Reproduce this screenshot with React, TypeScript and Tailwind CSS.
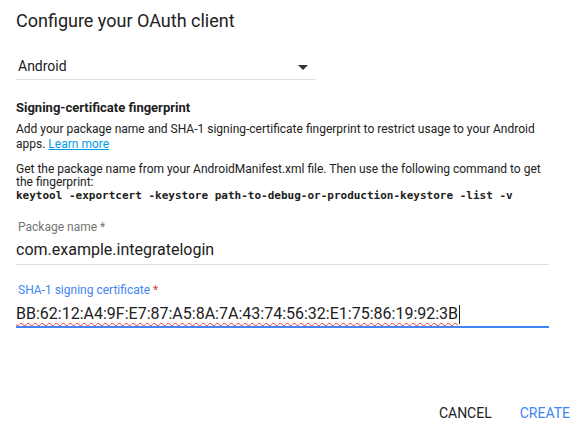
import React from 'react';

export default function App() {
  return (
    <div className="w-[588px] h-[439px] bg-white relative text-[#212121]" style={{ fontFamily: 'Roboto, "Liberation Sans", sans-serif' }}>
      <div className="px-4 pt-[9px]">
        <h1 className="text-[18px] leading-[24px] text-[#212121]">Configure your OAuth client</h1>

        {/* application type select */}
        <div className="mt-[22px] w-[300px] border-b border-[#e0e0e0] flex items-center justify-between pl-[2px] pr-[8px] h-[25px] pb-[1px]">
          <span className="text-[14px] text-[#212121]">Android</span>
          <svg width="10" height="5" viewBox="0 0 10 5" className="mt-[1px]">
            <path d="M0 0 L10 0 L5 5 Z" fill="#333" />
          </svg>
        </div>

        <div className="mt-[19px]">
          <div className="text-[13px] font-bold leading-[18px] text-[#212121]">Signing-certificate fingerprint</div>
          <p className="mt-[5px] text-[12px] leading-[15px] text-[#212121] w-[540px]">
            Add your package name and SHA-1 signing-certificate fingerprint to restrict usage to your Android apps.{' '}
            <span className="text-[#039be5] underline">Learn more</span>
          </p>
          <p className="mt-[11px] text-[12px] leading-[13px] text-[#212121] w-[540px]">
            Get the package name from your AndroidManifest.xml file. Then use the following command to get the fingerprint:
          </p>
          <div className="text-[11px] leading-[13px] font-bold text-[#212121]" style={{ fontFamily: '"DejaVu Sans Mono", monospace' }}>
            keytool -exportcert -keystore path-to-debug-or-production-keystore -list -v
          </div>
        </div>

        {/* package name */}
        <div className="mt-[18px] w-[533px]">
          <div className="text-[12px] leading-[14px] text-[#757575] pl-[2px]">Package name<span className="text-[#757575]"> *</span></div>
          <div className="mt-[6px] text-[16px] leading-[20px] text-[#212121] pb-[4px] border-b border-[#e0e0e0]">com.example.integratelogin</div>
        </div>

        {/* sha-1 */}
        <div className="mt-[18px] w-[533px]">
          <div className="text-[12px] leading-[14px] text-[#4285f4] pl-[2px]">SHA-1 signing certificate<span className="text-[#db4437]"> *</span></div>
          <div className="mt-[7px] text-[16px] leading-[20px] text-[#212121] pb-[2px] border-b-2 border-[#4285f4] flex items-center">
            <span className="underline decoration-wavy decoration-[#e53935] decoration-1 underline-offset-[3px]">BB:62:12:A4:9F:E7:87:A5:8A:7A:43:74:56:32:E1:75:86:19:92:3B</span>
            <span className="inline-block w-[1px] h-[19px] bg-[#212121] ml-[1px]" />
          </div>
        </div>
      </div>

      <div className="absolute right-[18px] top-[404px] flex gap-[28px] text-[14px] leading-[18px]">
        <span className="text-[#212121]">CANCEL</span>
        <span className="text-[#4285f4]">CREATE</span>
      </div>
    </div>
  );
}
